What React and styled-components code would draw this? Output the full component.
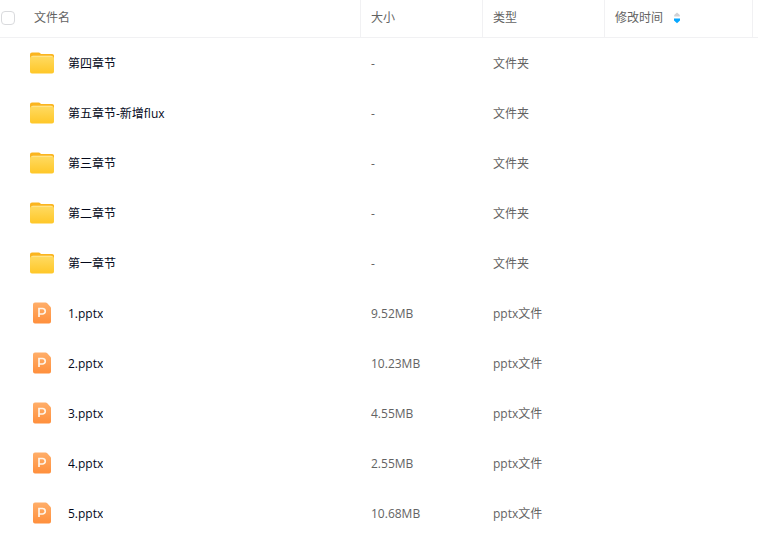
import React, { useState } from "react";
import styled, { createGlobalStyle } from "styled-components";

const GlobalStyle = createGlobalStyle`
  *, *::before, *::after {
    box-sizing: border-box;
  }

  body {
    margin: 0;
    background: #fff;
    font-family: "Open Sans", "Noto Sans CJK SC", sans-serif;
    font-size: 12px;
    line-height: 18px;
    color: #636363;
  }
`;

const FileTable = styled.table`
  width: 100%;
  table-layout: fixed;
  border-collapse: separate;
  border-spacing: 0;
`;

const Column = styled.col`
  width: ${({ $width }) => $width};
`;

const HeaderCell = styled.th`
  height: 38px;
  padding: 0 0 2px ${({ $first }) => ($first ? "1px" : "10px")};
  border-bottom: 1px solid #f1f1f3;
  border-left: ${({ $first }) => ($first ? "none" : "1px solid #f1f1f3")};
  font-weight: 400;
  text-align: left;
  white-space: nowrap;
`;

const EndCell = styled.td`
  border-bottom: 1px solid #f1f1f3;
  border-left: 1px solid #f1f1f3;
`;

const HeaderContent = styled.div`
  display: flex;
  align-items: center;
  gap: 19px;
`;

const Checkbox = styled.input`
  appearance: none;
  width: 14px;
  height: 14px;
  margin: 0;
  border: 1px solid #d9dadd;
  border-radius: 4px;
  background: #fff;

  &:checked {
    border-color: #06a7ff;
    background: #06a7ff;
  }
`;

const SortButton = styled.button`
  display: flex;
  align-items: center;
  gap: 10px;
  padding: 0;
  border: 0;
  background: none;
  color: inherit;
  font: inherit;
  cursor: pointer;
`;

const Cell = styled.td`
  height: 50px;
  padding: 2px 0 0 11px;
  white-space: nowrap;
`;

const NameCell = styled.td`
  height: 50px;
  padding: 0 10px 0 30px;
`;

const NameContent = styled.div`
  display: flex;
  align-items: center;
  gap: 14px;
`;

const FileLink = styled.a`
  overflow: hidden;
  padding-top: 2px;
  color: #03081a;
  text-decoration: none;
  text-overflow: ellipsis;
  white-space: nowrap;
`;

const Icon = styled.svg`
  display: block;
  flex: none;
`;

function FolderIcon() {
  return (
    <Icon width="24" height="24" viewBox="0 0 24 24" aria-hidden="true">
      <path d="M0 3.5A2 2 0 0 1 2 1.5h6.6c.8 0 1.2.3 1.7.8l.6.6h11A2 2 0 0 1 24 5v9H0z" fill="#fbb51f" />
      <path d="M1 6.5A1.8 1.8 0 0 1 2.8 4.7h18.4A1.8 1.8 0 0 1 23 6.5V10H1z" fill="#ffedb0" />
      <path d="M0 7.6a2 2 0 0 1 2-2h20a2 2 0 0 1 2 2v13a2 2 0 0 1-2 2H2a2 2 0 0 1-2-2z" fill="url(#folderFront)" />
    </Icon>
  );
}

function PresentationIcon() {
  return (
    <Icon width="24" height="24" viewBox="0 0 24 24" aria-hidden="true">
      <path d="M3 3.5a2 2 0 0 1 2-2h10.6c.6 0 1 .2 1.4.6l3.4 3.6c.4.4.6.9.6 1.4v13.5a2 2 0 0 1-2 2H5a2 2 0 0 1-2-2z" fill="url(#presentationPage)" />
      <path d="M9 16V7.5h3.5a2.75 2.75 0 0 1 0 5.5H9" fill="none" stroke="#fff4e8" strokeWidth="1.7" />
    </Icon>
  );
}

function IconGradients() {
  return (
    <Icon width="0" height="0" aria-hidden="true">
      <defs>
        <linearGradient id="folderFront" x1="0" y1="0" x2="0" y2="1">
          <stop offset="0" stopColor="#ffda60" />
          <stop offset="1" stopColor="#ffc727" />
        </linearGradient>
        <linearGradient id="presentationPage" x1="0" y1="0" x2="0" y2="1">
          <stop offset="0" stopColor="#ffae69" />
          <stop offset="1" stopColor="#ff8f3c" />
        </linearGradient>
      </defs>
    </Icon>
  );
}

function SortIcon() {
  return (
    <Icon width="8" height="12" viewBox="0 0 8 12" aria-hidden="true">
      <path d="M4 .4 6.8 3V4.6H1.2V3z" fill="#cfd1d5" />
      <path d="M4 11.2 7 8.4V6.4H1v2z" fill="#06a7ff" />
    </Icon>
  );
}

const files = [
  { name: "第四章节", size: "-", folder: true },
  { name: "第五章节-新增flux", size: "-", folder: true },
  { name: "第三章节", size: "-", folder: true },
  { name: "第二章节", size: "-", folder: true },
  { name: "第一章节", size: "-", folder: true },
  { name: "1.pptx", size: "9.52MB" },
  { name: "2.pptx", size: "10.23MB" },
  { name: "3.pptx", size: "4.55MB" },
  { name: "4.pptx", size: "2.55MB" },
  { name: "5.pptx", size: "10.68MB" },
];

function FileRow({ file }) {
  return (
    <tr>
      <NameCell>
        <NameContent>
          {file.folder ? <FolderIcon /> : <PresentationIcon />}
          <FileLink href="#">{file.name}</FileLink>
        </NameContent>
      </NameCell>
      <Cell>{file.size}</Cell>
      <Cell>{file.folder ? "文件夹" : "pptx文件"}</Cell>
      <Cell />
      <td />
    </tr>
  );
}

export default function App() {
  const [allSelected, setAllSelected] = useState(false);

  return (
    <main>
      <GlobalStyle />
      <IconGradients />
      <FileTable>
        <colgroup>
          <Column $width="auto" />
          <Column $width="122px" />
          <Column $width="122px" />
          <Column $width="148px" />
          <Column $width="6px" />
        </colgroup>
        <thead>
          <tr>
            <HeaderCell $first scope="col">
              <HeaderContent>
                <Checkbox
                  id="select-all"
                  type="checkbox"
                  checked={allSelected}
                  onChange={(event) => setAllSelected(event.target.checked)}
                />
                <label htmlFor="select-all">文件名</label>
              </HeaderContent>
            </HeaderCell>
            <HeaderCell scope="col">大小</HeaderCell>
            <HeaderCell scope="col">类型</HeaderCell>
            <HeaderCell scope="col">
              <SortButton type="button">
                修改时间
                <SortIcon />
              </SortButton>
            </HeaderCell>
            <EndCell />
          </tr>
        </thead>
        <tbody>
          {files.map((file) => (
            <FileRow key={file.name} file={file} />
          ))}
        </tbody>
      </FileTable>
    </main>
  );
}
